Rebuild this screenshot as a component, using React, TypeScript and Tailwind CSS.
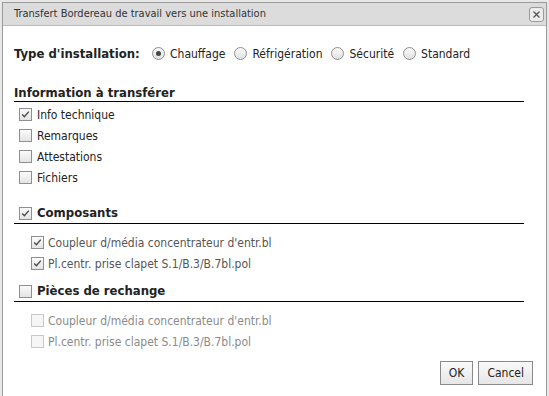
import React from 'react';

const font = { fontFamily: '"DejaVu Sans Condensed", "DejaVu Sans", sans-serif' };

const Check = ({ checked, disabled }: { checked?: boolean; disabled?: boolean }) => (
  <span
    className={`inline-flex w-[13px] h-[13px] shrink-0 items-center justify-center border ${
      disabled ? 'border-[#c8c8c8] bg-[#f6f6f6]' : 'border-[#8f8f8f] bg-gradient-to-b from-[#fbfbfb] to-[#e4e4e4]'
    }`}
  >
    {checked && (
      <svg width="9" height="9" viewBox="0 0 9 9">
        <path d="M1.2 4.6 L3.4 6.8 L7.8 1.6" fill="none" stroke="#4a4a4a" strokeWidth="1.4" />
      </svg>
    )}
  </span>
);

const Radio = ({ checked, label }: { checked?: boolean; label: string }) => (
  <label className="flex items-center gap-[5px]">
    <span className="inline-flex w-[13px] h-[13px] items-center justify-center rounded-full border border-[#8f8f8f] bg-gradient-to-b from-[#fbfbfb] to-[#e0e0e0]">
      {checked && <span className="w-[5px] h-[5px] rounded-full bg-[#444]" />}
    </span>
    <span>{label}</span>
  </label>
);

const Row = ({ label, checked }: { label: string; checked?: boolean }) => (
  <div className="flex items-center gap-[5px] h-[21px] pl-[5px]">
    <Check checked={checked} />
    <span>{label}</span>
  </div>
);

const SubRow = ({ label, checked, disabled }: { label: string; checked?: boolean; disabled?: boolean }) => (
  <div className={`flex items-center gap-[4px] h-[21px] pl-[17px] ${disabled ? 'text-[#8a8a8a]' : 'text-[#555]'}`}>
    <Check checked={checked} disabled={disabled} />
    <span>{label}</span>
  </div>
);

const Heading = ({ label, checked }: { label: string; checked?: boolean }) => (
  <div className="border-b border-black mr-[11px] flex items-center gap-[5px] h-[21px] pl-[5px]">
    <Check checked={checked} />
    <span className="font-bold text-[13px]">{label}</span>
  </div>
);

export default function App() {
  return (
    <div className="w-[549px] h-[396px] bg-[#e8e8e8] pt-[2px] pl-[2px] pr-[2px] overflow-hidden" style={font}>
      <div className="h-[420px] bg-white border border-[#9a9a9a] text-[12px] text-[#222]">
        <div className="h-[23px] bg-[#dcdcdc] border-b border-[#bcbcbc] flex items-center justify-between pl-[11px] pr-[2px]">
          <span className="text-[11px] text-[#333]">Transfert Bordereau de travail vers une installation</span>
          <button className="w-[15px] h-[15px] rounded-[3px] border border-[#9a9a9a] bg-[#ececec] flex items-center justify-center">
            <svg width="7" height="7" viewBox="0 0 7 7">
              <path d="M0.5 0.5 L6.5 6.5 M6.5 0.5 L0.5 6.5" stroke="#555" strokeWidth="1.3" />
            </svg>
          </button>
        </div>

        <div className="px-[11px] pt-[19px]">
          <div className="flex items-center h-[17px]">
            <span className="font-bold text-[13px] w-[138px]">Type d'installation:</span>
            <div className="flex items-center gap-[9px]">
              <Radio checked label="Chauffage" />
              <Radio label="Réfrigération" />
              <Radio label="Sécurité" />
              <Radio label="Standard" />
            </div>
          </div>

          <div className="mt-[23px] border-b border-black mr-[11px] leading-[15px]">
            <span className="font-bold text-[13px]">Information à transférer</span>
          </div>
          <div className="pt-[2px]">
            <Row checked label="Info technique" />
            <Row label="Remarques" />
            <Row label="Attestations" />
            <Row label="Fichiers" />
          </div>

          <div className="mt-[15px]">
            <Heading checked label="Composants" />
          </div>
          <div className="pt-[8px]">
            <SubRow checked label="Coupleur d/média concentrateur d'entr.bl" />
            <SubRow checked label="Pl.centr. prise clapet S.1/B.3/B.7bl.pol" />
          </div>

          <div className="mt-[7px]">
            <Heading label="Pièces de rechange" />
          </div>
          <div className="pt-[8px]">
            <SubRow disabled label="Coupleur d/média concentrateur d'entr.bl" />
            <SubRow disabled label="Pl.centr. prise clapet S.1/B.3/B.7bl.pol" />
          </div>

          <div className="flex justify-end gap-[5px] mt-[9px] mr-[2px]">
            <button className="h-[24px] px-[8px] border border-[#8a8a8a] bg-gradient-to-b from-[#fafafa] to-[#e6e6e6] text-[12px]">OK</button>
            <button className="h-[24px] px-[8px] border border-[#8a8a8a] bg-gradient-to-b from-[#fafafa] to-[#e6e6e6] text-[12px]">Cancel</button>
          </div>
        </div>
      </div>
    </div>
  );
}
